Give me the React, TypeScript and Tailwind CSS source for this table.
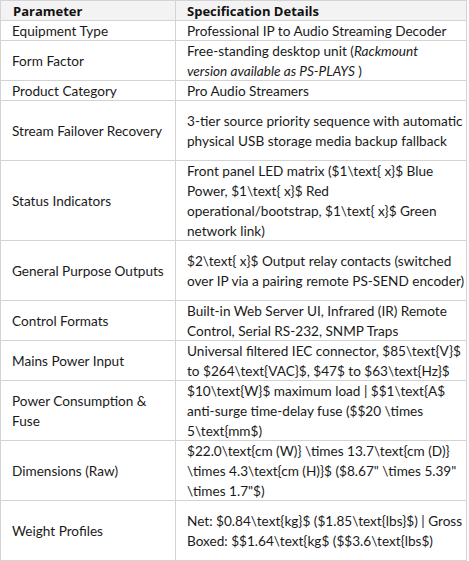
import React from "react";

type Row = {
  label: string[];
  lines: React.ReactNode[];
  h: string;
};

const rows: Row[] = [
  { label: ["Equipment Type"], lines: ["Professional IP to Audio Streaming Decoder"], h: "h-[20px] border-b" },
  {
    label: ["Form Factor"],
    lines: [
      <>Free-standing desktop unit (<i>Rackmount</i></>,
      <><i>version available as PS-PLAYS</i> )</>,
    ],
    h: "h-[40px] border-b",
  },
  { label: ["Product Category"], lines: ["Pro Audio Streamers"], h: "h-[20px] border-b" },
  {
    label: ["Stream Failover Recovery"],
    lines: ["3-tier source priority sequence with automatic", "physical USB storage media backup fallback"],
    h: "h-[60px] border-b",
  },
  {
    label: ["Status Indicators"],
    lines: [
      "Front panel LED matrix ($1\\text{ x}$ Blue",
      "Power, $1\\text{ x}$ Red",
      "operational/bootstrap, $1\\text{ x}$ Green",
      "network link)",
    ],
    h: "h-[80px] border-b",
  },
  {
    label: ["General Purpose Outputs"],
    lines: ["$2\\text{ x}$ Output relay contacts (switched", "over IP via a pairing remote PS-SEND encoder)"],
    h: "h-[60px] border-b",
  },
  {
    label: ["Control Formats"],
    lines: ["Built-in Web Server UI, Infrared (IR) Remote", "Control, Serial RS-232, SNMP Traps"],
    h: "h-[40px] border-b",
  },
  {
    label: ["Mains Power Input"],
    lines: ["Universal filtered IEC connector, $85\\text{V}$", "to $264\\text{VAC}$, $47$ to $63\\text{Hz}$"],
    h: "h-[40px] border-b",
  },
  {
    label: ["Power Consumption &", "Fuse"],
    lines: [
      "$10\\text{W}$ maximum load | $$1\\text{A$",
      "anti-surge time-delay fuse ($$20 \\times",
      "5\\text{mm$)",
    ],
    h: "h-[60px] border-b",
  },
  {
    label: ["Dimensions (Raw)"],
    lines: [
      "$22.0\\text{cm (W)} \\times 13.7\\text{cm (D)}",
      "\\times 4.3\\text{cm (H)}$ ($8.67\" \\times 5.39\"",
      "\\times 1.7\"$)",
    ],
    h: "h-[60px] border-b",
  },
  {
    label: ["Weight Profiles"],
    lines: [
      "Net: $0.84\\text{kg}$ ($1.85\\text{lbs}$) | Gross",
      "Boxed: $$1.64\\text{kg$ ($$3.6\\text{lbs$)",
    ],
    h: "h-[59px]",
  },
];

export default function App() {
  return (
    <div className="w-[469px] h-[561px] bg-white font-[Lato,sans-serif] text-[13.6px] leading-[20px] text-[#1a1a1a]">
      <div className="w-[467px] border border-[#d3d3d3] flex flex-col">
        <div className="h-[20px] border-b border-[#d3d3d3] bg-[#f3f3f3] flex font-['Open_Sans',sans-serif] font-bold text-[13px] text-[#111]">
          <div className="w-[175px] border-r border-[#d3d3d3] pl-[12px] flex items-center whitespace-nowrap">
            Parameter
          </div>
          <div className="flex-1 pl-[11px] flex items-center whitespace-nowrap">Specification Details</div>
        </div>
        {rows.map((r, i) => (
          <div key={i} className={`${r.h} border-[#d3d3d3] flex`}>
            <div className="w-[175px] border-r border-[#d3d3d3] pl-[11px] flex flex-col justify-center whitespace-nowrap">
              {r.label.map((l, j) => (
                <div key={j}>{l}</div>
              ))}
            </div>
            <div className="flex-1 pl-[11px] flex flex-col justify-center whitespace-nowrap">
              {r.lines.map((l, j) => (
                <div key={j}>{l}</div>
              ))}
            </div>
          </div>
        ))}
      </div>
    </div>
  );
}
